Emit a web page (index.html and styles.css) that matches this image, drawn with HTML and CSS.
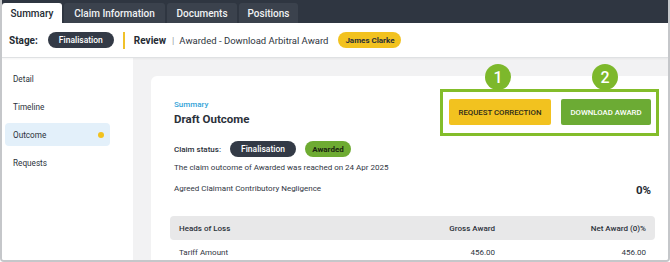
FILE: index.html
```html
<!DOCTYPE html>
<html>
<head>
<meta charset="utf-8">
<link rel="stylesheet" href="styles.css">
</head>
<body>
<div class="frame">
  <div class="tabs">
    <div class="tab active">Summary</div>
    <div class="tab t2">Claim Information</div>
    <div class="tab t3">Documents</div>
    <div class="tab t4">Positions</div>
  </div>
  <div class="stagebar">
    <span class="stage-label">Stage:</span>
    <span class="pill dark stage-pill">Finalisation</span>
    <span class="vbar"></span>
    <span class="review">Review</span>
    <span class="sep">|</span>
    <span class="stage-text">Awarded - Download Arbitral Award</span>
    <span class="pill yellow user">James Clarke</span>
  </div>
  <div class="main">
    <nav class="side">
      <div class="nav-item">Detail</div>
      <div class="nav-item">Timeline</div>
      <div class="nav-item selected">Outcome<span class="dot"></span></div>
      <div class="nav-item">Requests</div>
    </nav>
    <div class="content">
      <div class="card">
        <div class="card-head">
          <div class="titles">
            <div class="eyebrow">Summary</div>
            <div class="title">Draft Outcome</div>
          </div>
          <div class="actions">
            <button class="btn btn-yellow">REQUEST CORRECTION</button>
            <button class="btn btn-green">DOWNLOAD AWARD</button>
            <div class="highlight"></div>
            <div class="badge b1">1</div>
            <div class="badge b2">2</div>
          </div>
        </div>
        <div class="status-row">
          <span class="status-label">Claim status:</span>
          <span class="pill dark sp sp-dark">Finalisation</span>
          <span class="pill green sp sp-green">Awarded</span>
        </div>
        <div class="note">The claim outcome of Awarded was reached on 24 Apr 2025</div>
        <div class="neg-row">
          <span class="neg-label">Agreed Claimant Contributory Negligence</span>
          <span class="pct">0%</span>
        </div>
        <div class="table">
          <div class="trow thead">
            <span>Heads of Loss</span>
            <span class="num">Gross Award</span>
            <span class="num">Net Award (0)%</span>
          </div>
          <div class="trow">
            <span>Tariff Amount</span>
            <span class="num">456.00</span>
            <span class="num">456.00</span>
          </div>
        </div>
      </div>
    </div>
  </div>
</div>
</body>
</html>
```
FILE: styles.css
```css
* { box-sizing: border-box; }
html, body { margin: 0; padding: 0; }
body {
  font-family: Roboto, "Liberation Sans", sans-serif;
  color: #2c323b;
  background: #ffffff;
}
.frame {
  width: 670px;
  height: 262px;
  border: 2px solid #c5c7ca;
  border-top: 0;
  border-radius: 0 0 4px 4px;
  overflow: hidden;
  display: flex;
  flex-direction: column;
}
.tabs {
  height: 23px;
  flex: none;
  background: #2f3641;
  display: flex;
  align-items: flex-end;
  gap: 2px;
}
.tab {
  height: 20px;
  background: #3b424d;
  color: #f0f2f4;
  font-size: 10px;
  font-weight: 500;
  display: flex;
  align-items: center;
  justify-content: center;
  border-radius: 3px 3px 0 0;
}
.tab.active { background: #ffffff; color: #252b33; width: 60px; }
.tab.t2 { width: 101px; }
.tab.t3 { width: 70px; }
.tab.t4 { width: 59px; }
.stagebar {
  height: 35px;
  flex: none;
  display: flex;
  align-items: center;
  padding-left: 7px;
  border-bottom: 1px solid #dfe1e3;
  box-shadow: 0 1px 2px rgba(0,0,0,0.05);
  position: relative;
  z-index: 1;
  font-size: 9.5px;
}
.stage-label { font-weight: 700; font-size: 10px; color: #252b33; }
.pill {
  display: inline-flex;
  align-items: center;
  justify-content: center;
  border-radius: 9px;
  font-size: 8.5px;
  font-weight: 500;
}
.dark { background: #333a46; color: #ffffff; }
.yellow { background: #f2c21f; color: #2a2f36; }
.green { background: #6eab32; color: #1b2510; }
.stage-pill { width: 66px; height: 16px; margin-left: 10px; }
.vbar { width: 2px; height: 17px; background: #f0c12a; margin-left: 9px; }
.review { font-weight: 700; font-size: 10px; margin-left: 9px; color: #252b33; }
.sep { color: #9a9ea4; margin: 0 5px 0 6px; }
.stage-text { color: #2f353e; }
.user { width: 63px; height: 16px; margin-left: 10px; font-size: 8px; font-weight: 700; }
.main { flex: 1; display: flex; min-height: 0; }
.side {
  width: 131px;
  flex: none;
  background: #ffffff;
  padding: 9px 23px 0 3px;
  display: flex;
  flex-direction: column;
  gap: 5px;
}
.nav-item {
  height: 23px;
  display: flex;
  align-items: center;
  justify-content: space-between;
  padding: 0 6px 0 8px;
  font-size: 8.2px;
  color: #2c323b;
  border-radius: 4px;
}
.nav-item.selected { background: #e3f0fa; }
.dot { width: 6px; height: 6px; border-radius: 50%; background: #f2c21f; }
.content {
  flex: 1;
  background: #f2f2f3;
  padding: 18px 0 0 18px;
  min-width: 0;
}
.card {
  background: #ffffff;
  border-radius: 6px 0 0 0;
  height: 100%;
  padding: 23px 13px 0 19px;
}
.card-head {
  display: flex;
  justify-content: space-between;
  align-items: flex-start;
  padding: 0 4px;
}
.eyebrow { color: #33a3d8; font-size: 8px; line-height: 10px; font-weight: 500; margin-top: 1px; }
.title { font-size: 11.5px; line-height: 14px; font-weight: 700; color: #2b313a; margin-top: 2px; }
.actions { position: relative; display: flex; gap: 10px; }
.btn {
  border: 0;
  border-radius: 2px;
  height: 26px;
  font-family: inherit;
  font-size: 7.8px;
  font-weight: 500;
  padding: 0;
}
.btn-yellow { background: #f2c21f; color: #2d2a1c; width: 102px; }
.btn-green { background: #6cab34; color: #ffffff; width: 90px; }
.highlight {
  position: absolute;
  left: -9px;
  top: -10px;
  right: -8px;
  bottom: -11px;
  border: 3px solid #83bd2a;
  pointer-events: none;
}
.badge {
  position: absolute;
  top: -35px;
  width: 26px;
  height: 26px;
  border-radius: 50%;
  background: #7db82b;
  color: #ffffff;
  font-size: 16px;
  font-weight: 500;
  display: flex;
  align-items: center;
  justify-content: center;
}
.b1 { left: 36px; }
.b2 { left: 143px; }
.status-row {
  display: flex;
  align-items: center;
  margin-top: 15px;
  padding: 0 4px;
}
.status-label { font-size: 8px; font-weight: 500; color: #2b313a; margin-right: 9px; }
.sp { height: 16px; margin-right: 9px; }
.sp-dark { width: 66px; }
.sp-green { width: 46px; font-weight: 700; font-size: 8px; }
.note { font-size: 8px; line-height: 10px; color: #30363f; margin-top: 6px; padding: 0 4px; }
.neg-row {
  display: flex;
  justify-content: space-between;
  align-items: flex-start;
  font-size: 8px;
  line-height: 10px;
  color: #30363f;
  margin-top: 10px;
  padding: 0 4px;
}
.neg-label { margin-top: 1px; }
.pct { font-size: 11.5px; line-height: 14px; font-weight: 700; color: #252b33; }
.table { margin-top: 19px; }
.trow {
  display: grid;
  grid-template-columns: 1fr 151px 151px;
  padding: 0 9px;
  height: 24px;
  align-items: center;
  font-size: 8px;
  color: #30363f;
}
.thead {
  background: #e8e8e9;
  border-radius: 4px;
  font-weight: 500;
  color: #2b313a;
}
.num { text-align: right; }
```
